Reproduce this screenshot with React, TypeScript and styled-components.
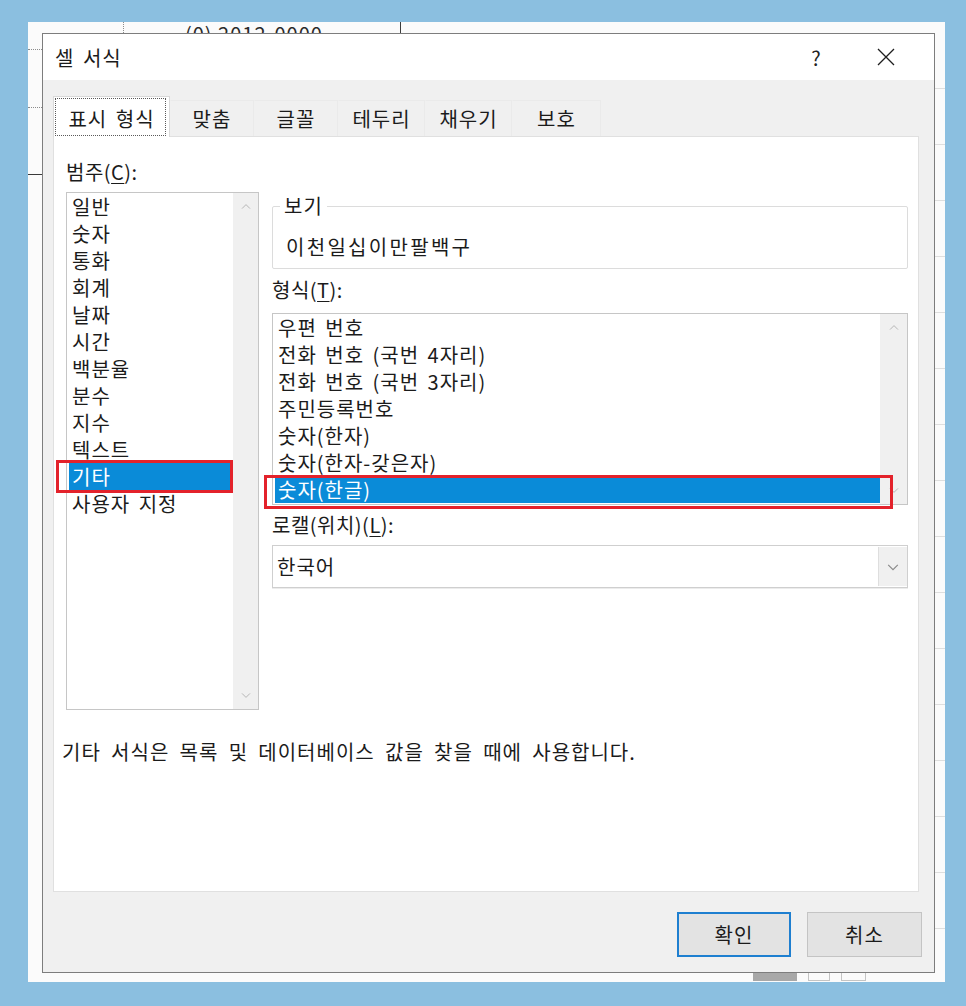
import React from 'react';
import styled, { createGlobalStyle } from 'styled-components';

const GlobalStyle = createGlobalStyle`
  html, body { margin: 0; padding: 0; }
  body {
    background: #8bbfe0;
    font-family: "Noto Sans CJK KR", "Noto Sans", sans-serif;
    color: #1b1b1b;
  }
`;

const Desktop = styled.div`
  width: 966px;
  height: 1006px;
  box-sizing: border-box;
  padding: 22px 21px 24px 28px;
`;

const Sheet = styled.div`
  width: 917px;
  height: 960px;
  background: #fbfbfb;
  display: flex;
  flex-direction: column;
`;

const SheetTop = styled.div`
  height: 11px;
  display: flex;
  overflow: hidden;
`;

const SheetCell = styled.div<{ $width: number; $line: 'dotted' | 'solid' }>`
  width: ${(p) => p.$width}px;
  flex: none;
  box-sizing: border-box;
  border-right: ${(p) => (p.$line === 'dotted' ? '1px dotted #8c8c8c' : '1px solid #3c3c3c')};
  padding-left: 61px;
  font-size: 20px;
  line-height: 20px;
  white-space: nowrap;
  color: #2a2a2a;
`;

const CellText = styled.div`
  margin-top: 2px;
  letter-spacing: 1px;
`;

const SheetMiddle = styled.div`
  display: flex;
  height: 940px;
`;

const LeftGutter = styled.div`
  width: 14px;
  display: flex;
  flex-direction: column;
`;

const GutterRow = styled.div<{ $height: number; $line: 'dotted' | 'solid' }>`
  height: ${(p) => p.$height}px;
  border-bottom: ${(p) => (p.$line === 'dotted' ? '1px dotted #8c8c8c' : '1px solid #3a3a3a')};
`;

const RightGutter = styled.div`
  width: 10px;
  background: repeating-linear-gradient(to bottom, transparent 0, transparent 55px, #dedede 55px, #dedede 56px);
`;

const SheetBottom = styled.div`
  height: 9px;
  display: flex;
  align-items: flex-start;
  padding-left: 725px;
  gap: 11px;
`;

const StatusIcon = styled.div<{ $width: number; $filled?: boolean }>`
  width: ${(p) => p.$width}px;
  height: 8px;
  box-sizing: border-box;
  background: ${(p) => (p.$filled ? '#a8a8a8' : 'transparent')};
  border: 1px solid ${(p) => (p.$filled ? '#a8a8a8' : '#c4c4c4')};
  border-top: none;
`;

const Dialog = styled.div`
  width: 893px;
  height: 940px;
  box-sizing: border-box;
  border: 1px solid #7d7d7d;
  background: #f0f0f0;
  display: flex;
  flex-direction: column;
  word-spacing: 3px;
  letter-spacing: 1px;
`;

const TitleBar = styled.div`
  height: 46px;
  flex: none;
  background: #ffffff;
  display: flex;
  align-items: center;
  padding: 0 14px 0 12px;
`;

const Title = styled.div`
  flex: 1;
  font-size: 20px;
  line-height: 27px;
`;

const TitleButton = styled.div`
  width: 69px;
  height: 46px;
  display: flex;
  align-items: center;
  justify-content: center;
  font-size: 20px;
  color: #222;
`;

const Body = styled.div`
  flex: 1;
  display: flex;
  flex-direction: column;
  padding: 0 15px 0 10px;
`;

const TabStrip = styled.div`
  height: 56px;
  flex: none;
  display: flex;
  align-items: flex-end;
`;

const Tab = styled.div<{ $width: number; $active?: boolean }>`
  position: relative;
  width: ${(p) => p.$width}px;
  height: ${(p) => (p.$active ? 41 : 36)}px;
  box-sizing: border-box;
  display: flex;
  align-items: center;
  justify-content: center;
  padding-top: ${(p) => (p.$active ? 3 : 0)}px;
  font-size: 20px;
  line-height: 27px;
  background: ${(p) => (p.$active ? '#ffffff' : '#f0f0f0')};
  border: 1px solid ${(p) => (p.$active ? '#d9d9d9' : '#eaeaea')};
  border-bottom: none;
  border-left-color: ${(p) => (p.$active ? '#d9d9d9' : 'transparent')};
  z-index: ${(p) => (p.$active ? 1 : 0)};
  margin-bottom: ${(p) => (p.$active ? -1 : 0)}px;
`;

const FocusRing = styled.div`
  position: absolute;
  left: 1px;
  right: 3px;
  top: 1px;
  bottom: 1px;
  border: 1px dotted #5a5a5a;
`;

const Panel = styled.div`
  height: 756px;
  flex: none;
  box-sizing: border-box;
  background: #ffffff;
  border: 1px solid #e0e0e0;
  display: flex;
  flex-direction: column;
`;

const Columns = styled.div`
  display: flex;
  gap: 13px;
  padding-left: 12px;
`;

const LeftColumn = styled.div`
  width: 193px;
  display: flex;
  flex-direction: column;
`;

const RightColumn = styled.div`
  width: 636px;
  display: flex;
  flex-direction: column;
`;

const FieldLabel = styled.div<{ $top: number }>`
  margin-top: ${(p) => p.$top}px;
  font-size: 20px;
  line-height: 27px;
  white-space: nowrap;
  letter-spacing: 0.5px;
  u { text-decoration-thickness: 1px; text-underline-offset: 3px; }
`;

const ListBox = styled.div<{ $height: number; $top: number }>`
  margin-top: ${(p) => p.$top}px;
  height: ${(p) => p.$height}px;
  box-sizing: border-box;
  border: 1px solid #c6c6c6;
  display: flex;
`;

const ListItems = styled.div`
  flex: 1;
  display: flex;
  flex-direction: column;
`;

const ListItem = styled.div<{ $selected?: boolean }>`
  position: relative;
  height: 27px;
  margin-left: 2px;
  padding-left: 3px;
  font-size: 20px;
  line-height: 27px;
  white-space: nowrap;
  background: ${(p) => (p.$selected ? '#0a8bd8' : 'transparent')};
  color: ${(p) => (p.$selected ? '#ffffff' : '#1b1b1b')};
`;

const Marker = styled.div<{ $l: number; $r: number; $t: number; $b: number }>`
  position: absolute;
  left: ${(p) => p.$l}px;
  right: ${(p) => p.$r}px;
  top: ${(p) => p.$t}px;
  bottom: ${(p) => p.$b}px;
  border: 3px solid #e3222b;
  pointer-events: none;
`;

const ScrollTrack = styled.div<{ $width: number }>`
  width: ${(p) => p.$width}px;
  flex: none;
  background: #f0f0f0;
  display: flex;
  flex-direction: column;
  justify-content: space-between;
  align-items: center;
  padding: 10px 0;
`;

const Group = styled.fieldset`
  margin: 59px 0 0;
  padding: 0 0 8px 13px;
  border: 1px solid #dcdcdc;
  border-radius: 2px;
  min-width: 0;
`;

const GroupLegend = styled.legend`
  margin-left: -6px;
  padding: 0 4px;
  font-size: 20px;
  line-height: 20px;
`;

const PreviewText = styled.div`
  margin-top: 17px;
  font-size: 20px;
  line-height: 27px;
  letter-spacing: 2.3px;
`;

const Combo = styled.div`
  margin-top: 7px;
  height: 43px;
  box-sizing: border-box;
  border: 1px solid #cfcfcf;
  box-shadow: 0 1px 0 #ececec;
  display: flex;
  align-items: center;
`;

const ComboValue = styled.div`
  flex: 1;
  padding-left: 4px;
  font-size: 20px;
  line-height: 27px;
`;

const ComboButton = styled.div`
  width: 28px;
  align-self: stretch;
  margin: 1px 0;
  background: #f0f0f0;
  border-left: 1px solid #dedede;
  display: flex;
  align-items: center;
  justify-content: center;
`;

const Description = styled.div`
  margin-top: 28px;
  padding-left: 8px;
  font-size: 20px;
  line-height: 27px;
  word-spacing: 4.8px;
`;

const Footer = styled.div`
  flex: 1;
  display: flex;
  justify-content: flex-end;
  align-items: flex-start;
  gap: 16px;
  padding-top: 20px;
  margin-right: -3px;
`;

const DialogButton = styled.div<{ $default?: boolean; $width: number }>`
  width: ${(p) => p.$width}px;
  height: 45px;
  box-sizing: border-box;
  display: flex;
  align-items: center;
  justify-content: center;
  font-size: 20px;
  background: #e3e3e3;
  border: ${(p) => (p.$default ? '2px solid #1e7fd0' : '1px solid #c4c4c4')};
`;

function Chevron({ dir, color = '#b3b3b3', size = 10 }: { dir: 'up' | 'down'; color?: string; size?: number }) {
  const pts = dir === 'up' ? '1,7 6,2 11,7' : '1,3 6,8 11,3';
  return (
    <svg width={size} height={size * 0.8} viewBox="0 0 12 10" fill="none">
      <polyline points={pts} stroke={color} strokeWidth="1.2" />
    </svg>
  );
}

function CloseIcon() {
  return (
    <svg width="18" height="18" viewBox="0 0 18 18">
      <path d="M1 1 L17 17 M17 1 L1 17" stroke="#1e1e1e" strokeWidth="1.3" />
    </svg>
  );
}

const categories = ['일반', '숫자', '통화', '회계', '날짜', '시간', '백분율', '분수', '지수', '텍스트', '기타', '사용자 지정'];
const formats = [
  '우편 번호',
  '전화 번호 (국번 4자리)',
  '전화 번호 (국번 3자리)',
  '주민등록번호',
  '숫자(한자)',
  '숫자(한자-갖은자)',
  '숫자(한글)',
];
const tabs = [
  { label: '표시 형식', width: 117 },
  { label: '맞춤', width: 84 },
  { label: '글꼴', width: 84 },
  { label: '테두리', width: 87 },
  { label: '채우기', width: 87 },
  { label: '보호', width: 89 },
];

export default function App() {
  return (
    <>
      <GlobalStyle />
      <Desktop>
        <Sheet>
          <SheetTop>
            <SheetCell $width={96} $line="dotted" />
            <SheetCell $width={277} $line="solid">
              <CellText>(0) 2012-0000</CellText>
            </SheetCell>
          </SheetTop>
          <SheetMiddle>
            <LeftGutter>
              <GutterRow $height={16} $line="dotted" />
              <GutterRow $height={57} $line="dotted" />
              <GutterRow $height={66} $line="solid" />
            </LeftGutter>
            <Dialog>
              <TitleBar>
                <Title>셀 서식</Title>
                <TitleButton>?</TitleButton>
                <TitleButton>
                  <CloseIcon />
                </TitleButton>
              </TitleBar>
              <Body>
                <TabStrip>
                  {tabs.map((t, i) => (
                    <Tab key={t.label} $width={t.width} $active={i === 0}>
                      {i === 0 && <FocusRing />}
                      {t.label}
                    </Tab>
                  ))}
                </TabStrip>
                <Panel>
                  <Columns>
                    <LeftColumn>
                      <FieldLabel $top={21}>
                        범주(<u>C</u>):
                      </FieldLabel>
                      <ListBox $top={7} $height={518}>
                        <ListItems>
                          {categories.map((c) => (
                            <ListItem key={c} $selected={c === '기타'}>
                              {c}
                              {c === '기타' && <Marker $l={-13} $r={0} $t={-3} $b={-3} />}
                            </ListItem>
                          ))}
                        </ListItems>
                        <ScrollTrack $width={25}>
                          <Chevron dir="up" />
                          <Chevron dir="down" />
                        </ScrollTrack>
                      </ListBox>
                    </LeftColumn>
                    <RightColumn>
                      <Group>
                        <GroupLegend>보기</GroupLegend>
                        <PreviewText>이천일십이만팔백구</PreviewText>
                      </Group>
                      <FieldLabel $top={7}>
                        형식(<u>T</u>):
                      </FieldLabel>
                      <ListBox $top={10} $height={192}>
                        <ListItems>
                          {formats.map((f) => (
                            <ListItem key={f} $selected={f === '숫자(한글)'}>
                              {f}
                              {f === '숫자(한글)' && <Marker $l={-11} $r={-13} $t={-1} $b={-6} />}
                            </ListItem>
                          ))}
                        </ListItems>
                        <ScrollTrack $width={27}>
                          <Chevron dir="up" />
                          <Chevron dir="down" />
                        </ScrollTrack>
                      </ListBox>
                      <FieldLabel $top={6}>
                        로캘(위치)(<u>L</u>):
                      </FieldLabel>
                      <Combo>
                        <ComboValue>한국어</ComboValue>
                        <ComboButton>
                          <Chevron dir="down" color="#8a8a8a" size={12} />
                        </ComboButton>
                      </Combo>
                    </RightColumn>
                  </Columns>
                  <Description>기타 서식은 목록 및 데이터베이스 값을 찾을 때에 사용합니다.</Description>
                </Panel>
                <Footer>
                  <DialogButton $default $width={114}>확인</DialogButton>
                  <DialogButton $width={115}>취소</DialogButton>
                </Footer>
              </Body>
            </Dialog>
            <RightGutter />
          </SheetMiddle>
          <SheetBottom>
            <StatusIcon $width={44} $filled />
            <StatusIcon $width={22} />
            <StatusIcon $width={25} />
          </SheetBottom>
        </Sheet>
      </Desktop>
    </>
  );
}
